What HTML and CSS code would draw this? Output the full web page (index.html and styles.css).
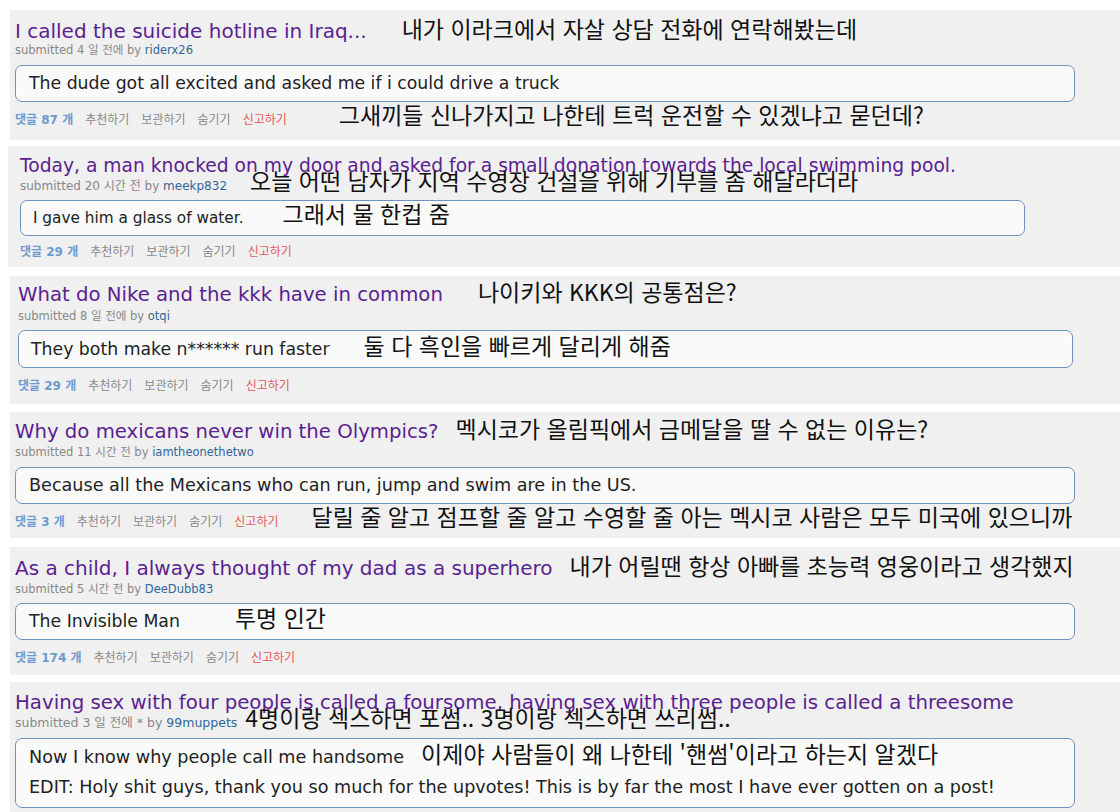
FILE: index.html
```html
<!DOCTYPE html>
<html lang="ko">
<head>
  <meta charset="UTF-8">
  <title>유머 모음</title>
  <link rel="stylesheet" href="styles.css">
</head>
<body>

  <!-- 1 -->
  <div class="post post-1">
    <p class="title"><a href="#">I called the suicide hotline in Iraq...</a><span class="ko">내가 이라크에서 자살 상담 전화에 연락해봤는데</span></p>
    <p class="meta">submitted 4 일 전에 by <a href="#" class="author">riderx26</a></p>
    <div class="text"><p>The dude got all excited and asked me if i could drive a truck</p></div>
    <ul class="actions">
      <li class="comments">댓글 87 개</li>
      <li>추천하기</li>
      <li>보관하기</li>
      <li>숨기기</li>
      <li class="report">신고하기</li>
      <li class="ko">그새끼들 신나가지고 나한테 트럭 운전할 수 있겠냐고 묻던데?</li>
    </ul>
  </div>

  <!-- 2 -->
  <div class="post post-2">
    <p class="title"><a href="#">Today, a man knocked on my door and asked for a small donation towards the local swimming pool.</a></p>
    <p class="meta">submitted 20 시간 전 by <a href="#" class="author">meekp832</a><span class="ko">오늘 어떤 남자가 지역 수영장 건설을 위해 기부를 좀 해달라더라</span></p>
    <div class="text"><p>I gave him a glass of water.<span class="ko">그래서 물 한컵 줌</span></p></div>
    <ul class="actions">
      <li class="comments">댓글 29 개</li>
      <li>추천하기</li>
      <li>보관하기</li>
      <li>숨기기</li>
      <li class="report">신고하기</li>
    </ul>
  </div>

  <!-- 3 -->
  <div class="post post-3">
    <p class="title"><a href="#">What do Nike and the kkk have in common</a><span class="ko">나이키와 KKK의 공통점은?</span></p>
    <p class="meta">submitted 8 일 전에 by <a href="#" class="author">otqi</a></p>
    <div class="text"><p>They both make n****** run faster<span class="ko">둘 다 흑인을 빠르게 달리게 해줌</span></p></div>
    <ul class="actions">
      <li class="comments">댓글 29 개</li>
      <li>추천하기</li>
      <li>보관하기</li>
      <li>숨기기</li>
      <li class="report">신고하기</li>
    </ul>
  </div>

  <!-- 4 -->
  <div class="post post-4">
    <p class="title"><a href="#">Why do mexicans never win the Olympics?</a><span class="ko">멕시코가 올림픽에서 금메달을 딸 수 없는 이유는?</span></p>
    <p class="meta">submitted 11 시간 전 by <a href="#" class="author">iamtheonethetwo</a></p>
    <div class="text"><p>Because all the Mexicans who can run, jump and swim are in the US.</p></div>
    <ul class="actions">
      <li class="comments">댓글 3 개</li>
      <li>추천하기</li>
      <li>보관하기</li>
      <li>숨기기</li>
      <li class="report">신고하기</li>
      <li class="ko">달릴 줄 알고 점프할 줄 알고 수영할 줄 아는 멕시코 사람은 모두 미국에 있으니까</li>
    </ul>
  </div>

  <!-- 5 -->
  <div class="post post-5">
    <p class="title"><a href="#">As a child, I always thought of my dad as a superhero</a><span class="ko">내가 어릴땐 항상 아빠를 초능력 영웅이라고 생각했지</span></p>
    <p class="meta">submitted 5 시간 전 by <a href="#" class="author">DeeDubb83</a></p>
    <div class="text"><p>The Invisible Man<span class="ko">투명 인간</span></p></div>
    <ul class="actions">
      <li class="comments">댓글 174 개</li>
      <li>추천하기</li>
      <li>보관하기</li>
      <li>숨기기</li>
      <li class="report">신고하기</li>
    </ul>
  </div>

  <!-- 6 -->
  <div class="post post-6">
    <p class="title"><a href="#">Having sex with four people is called a foursome, having sex with three people is called a threesome</a></p>
    <p class="meta">submitted 3 일 전에 * by <a href="#" class="author">99muppets</a><span class="ko">4명이랑 섹스하면 포썸.. 3명이랑 섹스하면 쓰리썸..</span></p>
    <div class="text">
      <p>Now I know why people call me handsome<span class="ko">이제야 사람들이 왜 나한테 '핸썸'이라고 하는지 알겠다</span></p>
      <p>EDIT: Holy shit guys, thank you so much for the upvotes! This is by far the most I have ever gotten on a post!</p>
    </div>
  </div>

</body>
</html>
```

FILE: styles.css
```css
body {
  margin: 0;
  padding: 10px 0 0 0;
  background: #fff;
  font-family: "DejaVu Sans", Verdana, "Noto Sans CJK KR", sans-serif;
  color: #222;
}
p {
  margin: 0;
}
a {
  text-decoration: none;
}

.post {
  background: #f0f0f0;
  margin: 0 0 6px 10px;
  padding: 9px 45px 12px 5px;
}

.title {
  font-size: 20px;
  line-height: 24px;
  white-space: nowrap;
}
.title a {
  color: #5a2290;
}

.meta {
  font-size: 11.5px;
  line-height: 14px;
  color: #888;
  white-space: nowrap;
}
.meta .author {
  color: #369;
}

.text {
  margin-top: 8px;
  padding: 8px 13px;
  background: #fafafa;
  border: 1px solid #6d93bf;
  border-radius: 7px;
  font-size: 17.3px;
  line-height: 19px;
  color: #222;
  white-space: nowrap;
}

.actions {
  list-style: none;
  margin: 10px 0 0;
  padding: 0;
  display: flex;
  align-items: baseline;
  gap: 12px;
  font-size: 12px;
  line-height: 16px;
  color: #888;
  white-space: nowrap;
}
.actions .comments {
  color: #6a9ad0;
  font-weight: bold;
}
.actions .report {
  color: #e55858;
}

/* 한국어 번역 */
.ko {
  font-family: "Noto Sans CJK KR", sans-serif;
  font-size: 23px;
  font-weight: normal;
  line-height: 0;
  color: #111;
  margin-left: 35px;
}
.actions .ko {
  margin-left: 40px;
}

/* 캡처마다 배율이 조금씩 달라서 블록마다 따로 맞춤 */
.post-2 {
  margin: 0 0 9px 8px;
  padding: 8px 95px 7px 12px;
}
.post-2 .title {
  font-size: 18.7px;
}
.post-2 .meta {
  font-size: 12px;
  line-height: 16px;
}
.post-2 .meta .ko {
  margin-left: 23px;
}
.post-2 .text {
  margin-top: 6px;
  padding: 8px 12px 7px;
  font-size: 15.3px;
}
.post-2 .text .ko {
  margin-left: 39px;
}
.post-2 .actions {
  margin-top: 8px;
}

.post-3 {
  margin-bottom: 8px;
  padding: 7px 47px 10px 8px;
}
.post-3 .title {
  font-size: 19.7px;
}
.post-3 .meta {
  line-height: 18px;
}
.post-3 .text {
  margin-top: 5px;
  padding: 9px 12px 8px;
}
.post-3 .text .ko {
  margin-left: 34px;
}

.post-4 {
  margin-bottom: 9px;
  padding-top: 8px;
  padding-bottom: 8px;
}
.post-4 .title {
  font-size: 19.7px;
}
.post-4 .title .ko {
  margin-left: 17px;
}
.post-4 .meta {
  line-height: 16px;
}
.post-4 .text {
  margin-top: 7px;
  font-size: 17.6px;
}
.post-4 .actions .ko {
  margin-left: 21px;
}

.post-5 {
  margin-bottom: 7px;
  padding-bottom: 9px;
}
.post-5 .title .ko {
  margin-left: 17px;
}
.post-5 .meta {
  line-height: 18px;
}
.post-5 .text {
  margin-top: 5px;
}
.post-5 .text .ko {
  margin-left: 55px;
}

.post-6 {
  margin-bottom: 0;
  padding-bottom: 4px;
}
.post-6 .title {
  font-size: 19.75px;
}
.post-6 .meta {
  font-size: 12.5px;
  line-height: 16px;
}
.post-6 .meta .ko {
  margin-left: 8px;
}
.post-6 .text {
  margin-top: 7px;
  padding: 6px 13px 8px;
  font-size: 17.6px;
}
.post-6 .text p {
  line-height: 24px;
}
.post-6 .text p + p {
  margin-top: 6px;
}
.post-6 .text .ko {
  margin-left: 17px;
}
```
